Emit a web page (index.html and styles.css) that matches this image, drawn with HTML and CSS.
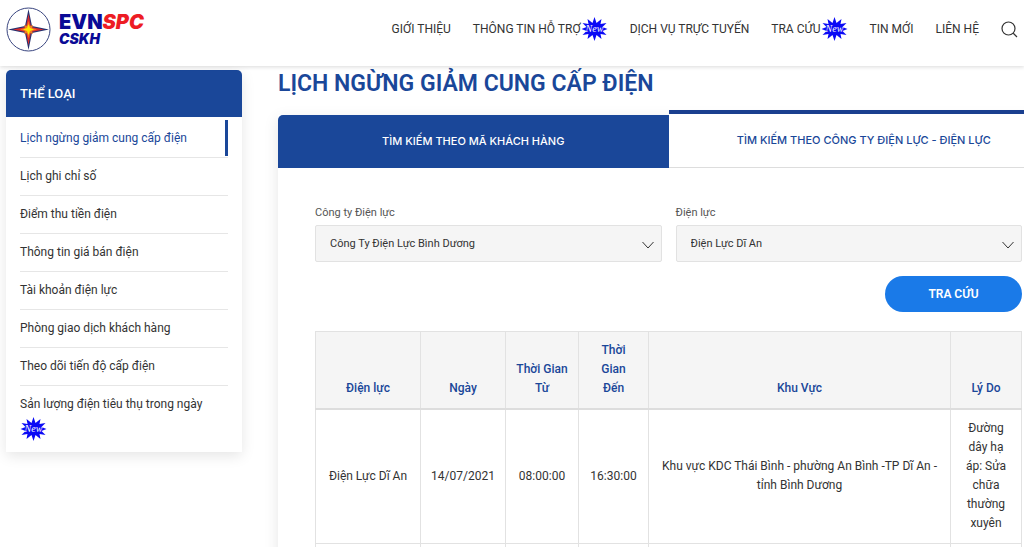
FILE: index.html
```html
<!DOCTYPE html>
<html lang="vi">
<head>
    <meta charset="UTF-8">
    <meta name="viewport" content="width=device-width, initial-scale=1.0">
    <title>Lịch ngừng giảm cung cấp điện</title>
    <link rel="stylesheet" href="styles.css">
</head>
<body>
    <header class="header">
        <a class="logo" href="#">
            <svg width="45" height="45" viewBox="0 0 45 45" aria-hidden="true">
                <circle cx="22.500" cy="22.500" r="21.500" fill="#fff" stroke="#39457f" stroke-width="1"/>
                <path d="M22.500 2l3.500 17L43 22.500 26 26l-3.500 17L19 26 2 22.500 19 19z" fill="#27316f"/>
                <path d="M22.500 7l2.500 13 13 2.500-13 2.500-2.500 13-2.500-13-13-2.500L20 20z" fill="#e02b2b"/>
                <path d="M22.500 14l1.500 5 3-1-1 3 5 1.500-5 1.500 1 3-3-1-1.500 5-1.500-5-3 1 1-3-5-1.500 5-1.500-1-3 3 1z" fill="#f47b20"/>
                <path d="M22.500 17l1.500 4 4 1.500-4 1.500-1.500 4-1.500-4-4-1.500 4-1.500z" fill="#ffe600"/>
            </svg>
            <span class="logo-text">
                <span class="logo-name">EVN<em>SPC</em></span>
                <span class="logo-sub">CSKH</span>
            </span>
        </a>
        <nav class="nav">
            <a href="#">GIỚI THIỆU</a>
            <a href="#">THÔNG TIN HỖ TRỢ<svg class="badge" viewBox="0 0 26 24"><polygon points="13,0 15,6 20,2 19,7 25,6 21,10 26,12 21,14 25,18 19,17 20,22 15,18 13,24 11,18 6,22 7,17 1,18 5,14 0,12 5,10 1,6 7,7 6,2 11,6"/><text x="13" y="15" text-anchor="middle">New</text></svg></a>
            <a href="#">DỊCH VỤ TRỰC TUYẾN</a>
            <a href="#">TRA CỨU<svg class="badge" viewBox="0 0 26 24"><polygon points="13,0 15,6 20,2 19,7 25,6 21,10 26,12 21,14 25,18 19,17 20,22 15,18 13,24 11,18 6,22 7,17 1,18 5,14 0,12 5,10 1,6 7,7 6,2 11,6"/><text x="13" y="15" text-anchor="middle">New</text></svg></a>
            <a href="#">TIN MỚI</a>
            <a href="#">LIÊN HỆ</a>
            <button class="search" type="button" aria-label="Tìm kiếm">
                <svg width="17" height="17" viewBox="0 0 17 17"><path d="M12.500 12.500L16 16M14 7.500a6.500 6.500 0 1 1-13 0 6.500 6.500 0 0 1 13 0z" fill="none" stroke="#333" stroke-width="1.200"/></svg>
            </button>
        </nav>
    </header>

    <div class="page">
        <aside class="sidebar">
            <h2>THỂ LOẠI</h2>
            <ul>
                <li><a class="active" href="#">Lịch ngừng giảm cung cấp điện</a></li>
                <li><a href="#">Lịch ghi chỉ số</a></li>
                <li><a href="#">Điểm thu tiền điện</a></li>
                <li><a href="#">Thông tin giá bán điện</a></li>
                <li><a href="#">Tài khoản điện lực</a></li>
                <li><a href="#">Phòng giao dịch khách hàng</a></li>
                <li><a href="#">Theo dõi tiến độ cấp điện</a></li>
                <li><a href="#">Sản lượng điện tiêu thụ trong ngày <svg class="badge" viewBox="0 0 26 24"><polygon points="13,0 15,6 20,2 19,7 25,6 21,10 26,12 21,14 25,18 19,17 20,22 15,18 13,24 11,18 6,22 7,17 1,18 5,14 0,12 5,10 1,6 7,7 6,2 11,6"/><text x="13" y="15" text-anchor="middle">New</text></svg></a></li>
            </ul>
        </aside>

        <main class="content">
            <h1>LỊCH NGỪNG GIẢM CUNG CẤP ĐIỆN</h1>
            <div class="panel">
                <div class="tabs">
                    <button class="tab" type="button">TÌM KIẾM THEO MÃ KHÁCH HÀNG</button>
                    <button class="tab current" type="button">TÌM KIẾM THEO CÔNG TY ĐIỆN LỰC - ĐIỆN LỰC</button>
                </div>
                <form class="form">
                    <div class="fields">
                        <div class="field">
                            <label for="company">Công ty Điện lực</label>
                            <div class="select">
                                <select id="company"><option>Công Ty Điện Lực Bình Dương</option></select>
                                <svg class="arrow" viewBox="0 0 12 8"><path d="M0.500 1L6 7l5.500-6"/></svg>
                            </div>
                        </div>
                        <div class="field">
                            <label for="unit">Điện lực</label>
                            <div class="select">
                                <select id="unit"><option>Điện Lực Dĩ An</option></select>
                                <svg class="arrow" viewBox="0 0 12 8"><path d="M0.500 1L6 7l5.500-6"/></svg>
                            </div>
                        </div>
                    </div>
                    <button class="submit" type="button">TRA CỨU</button>
                </form>
                <table class="schedule">
                    <colgroup>
                        <col class="col-unit"><col class="col-date"><col class="col-from"><col class="col-to"><col><col class="col-reason">
                    </colgroup>
                    <thead>
                        <tr>
                            <th>Điện lực</th>
                            <th>Ngày</th>
                            <th>Thời Gian<br>Từ</th>
                            <th>Thời<br>Gian<br>Đến</th>
                            <th>Khu Vực</th>
                            <th>Lý Do</th>
                        </tr>
                    </thead>
                    <tbody>
                        <tr>
                            <td>Điện Lực Dĩ An</td>
                            <td>14/07/2021</td>
                            <td>08:00:00</td>
                            <td>16:30:00</td>
                            <td>Khu vực KDC Thái Bình - phường An Bình -TP Dĩ An - tỉnh Bình Dương</td>
                            <td>Đường dây hạ áp: Sửa chữa thường xuyên</td>
                        </tr>
                        <tr><td></td><td></td><td></td><td></td><td></td><td></td></tr>
                    </tbody>
                </table>
            </div>
        </main>
    </div>
</body>
</html>
```
FILE: styles.css
```css
* {
    box-sizing: border-box;
}

body {
    margin: 0;
    height: 100vh;
    overflow: hidden;
    font-family: Roboto, "Liberation Sans", sans-serif;
    font-size: 12px;
    line-height: 19px;
    color: #333;
    background: #fff;
}

a {
    color: inherit;
    text-decoration: none;
}

button, select {
    font: inherit;
    color: inherit;
    cursor: pointer;
}

/* header */
.header {
    position: relative;
    display: flex;
    justify-content: space-between;
    align-items: center;
    height: 66px;
    padding: 0 6px 8px;
    background: #fff;
    box-shadow: 0 1px 4px rgba(0, 0, 0, 0.15);
}

.logo {
    display: flex;
    align-items: center;
    gap: 8px;
    color: #0a0a96;
    font-family: Inter, "Liberation Sans", sans-serif;
    font-weight: 900;
}

.logo-text {
    display: flex;
    flex-direction: column;
}

.logo-name {
    font-size: 20px;
    line-height: 20px;
}

.logo-name em {
    color: #ed1c24;
}

.logo-sub {
    font-size: 14px;
    line-height: 14px;
    font-style: italic;
}

.nav {
    display: flex;
    align-items: center;
    gap: 22px;
    white-space: nowrap;
}

.nav a {
    display: flex;
    align-items: center;
}

.badge {
    width: 27px;
    height: 24px;
    fill: #0a0af5;
}

.badge text {
    font: italic 10px "Liberation Serif", serif;
    fill: #fff;
}

.search {
    display: flex;
    padding: 0;
    border: none;
    background: none;
}

/* layout */
.page {
    display: flex;
    align-items: flex-start;
    gap: 36px;
    padding: 4px 0 0 6px;
}

.sidebar {
    flex: 0 0 236px;
    border-radius: 5px 5px 0 0;
    box-shadow: 0 4px 14px rgba(0, 0, 0, 0.1);
}

.sidebar h2 {
    margin: 0;
    padding: 14px;
    border-radius: 5px 5px 0 0;
    background: #1a4799;
    color: #fff;
    font-size: 13px;
    font-weight: 500;
}

.sidebar ul {
    margin: 0;
    padding: 3px 14px 2px;
    list-style: none;
}

.sidebar li {
    padding-bottom: 1px;
    border-bottom: 1px solid #e6e6e6;
}

.sidebar li:last-child {
    border-bottom: none;
}

.sidebar li a {
    display: block;
    padding: 9px 0 8px;
}

.sidebar .active {
    border-right: 3px solid #1a4799;
    color: #1a4799;
}

.sidebar .badge {
    display: block;
    margin-top: 3px;
}

/* content */
.content {
    flex: 1;
    min-width: 0;
    margin-right: -35px;
}

h1 {
    margin: 0 0 17px;
    color: #1a4799;
    font-size: 23px;
    line-height: 28px;
    font-weight: 600;
}

.panel {
    box-shadow: 0 4px 14px rgba(0, 0, 0, 0.1);
}

.tabs {
    display: flex;
}

.tab {
    flex: 1;
    padding: 17px 0;
    border: none;
    border-radius: 5px 0 0 0;
    background: #1a4799;
    color: #fff;
    font-family: Inter, "Liberation Sans", sans-serif;
    font-size: 11px;
    font-weight: 500;
}

.tab.current {
    margin-top: -5px;
    border-top: 4px solid #1a3f8f;
    border-bottom: 1px solid #ddd;
    border-radius: 0;
    background: #fff;
    color: #1a4799;
}

.form {
    display: flex;
    flex-direction: column;
    padding: 35px 37px 19px;
}

.fields {
    display: flex;
    gap: 14px;
}

.field {
    flex: 1;
    font-size: 11px;
}

.field label {
    display: block;
    margin-bottom: 3px;
    color: #555;
}

.select {
    position: relative;
}

.select select {
    width: 100%;
    height: 37px;
    padding: 0 32px 0 14px;
    border: 1px solid #e2e2e2;
    border-radius: 2px;
    background: #f5f5f5;
    appearance: none;
}

.arrow {
    position: absolute;
    top: 16px;
    right: 8px;
    width: 12px;
    height: 8px;
    fill: none;
    stroke: #333;
    pointer-events: none;
}

.submit {
    align-self: flex-end;
    width: 137px;
    height: 36px;
    margin-top: 14px;
    border: none;
    border-radius: 18px;
    background: #1a7ae8;
    color: #fff;
    font-weight: 600;
}

/* table */
.schedule {
    width: calc(100% - 74px);
    margin: 0 37px;
    border-collapse: collapse;
    table-layout: fixed;
    text-align: center;
}

.schedule th, .schedule td {
    padding: 9px 8px 10px;
    border: 1px solid #e2e2e2;
}

.schedule th {
    border-bottom: 2px solid #ddd;
    background: #f5f5f5;
    color: #1a4799;
    font-weight: 500;
    vertical-align: bottom;
}

.col-unit {
    width: 105px;
}

.col-date {
    width: 85px;
}

.col-from {
    width: 73px;
}

.col-to {
    width: 70px;
}

.col-reason {
    width: 71px;
}
```
